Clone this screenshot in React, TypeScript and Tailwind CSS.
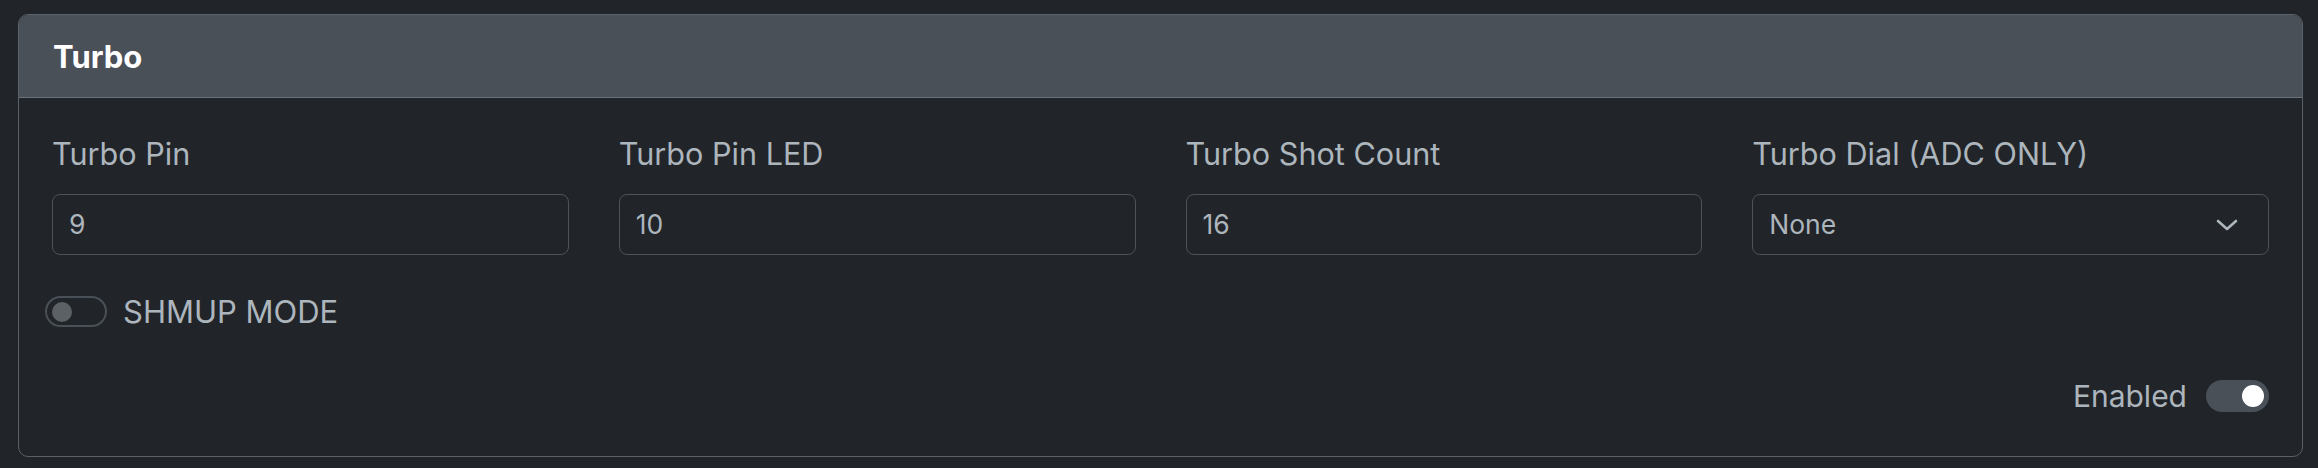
import React from 'react';

const fields = [
  { label: 'Turbo Pin', value: '9' },
  { label: 'Turbo Pin LED', value: '10' },
  { label: 'Turbo Shot Count', value: '16' },
];

function Chevron() {
  return (
    <svg width="22" height="12" viewBox="0 0 22 12" fill="none">
      <polyline points="2,2 11,10 20,2" stroke="#adb5bd" strokeWidth="2.6" strokeLinecap="round" strokeLinejoin="round" />
    </svg>
  );
}

export default function App() {
  return (
    <div
      className="w-full h-[468px] bg-[#212529] pt-[14px] pl-[18px] pr-[15px]"
      style={{ fontFamily: 'Inter, "Noto Sans", sans-serif' }}
    >
      <div className="border border-[#5a6168] rounded-[10px] overflow-hidden">
        <div className="h-[83px] bg-[#4a5058] border-b border-[#6c737a] px-[34px] flex items-center">
          <h5 className="text-[31px] font-bold text-white leading-none">Turbo</h5>
        </div>

        <div className="pt-[38px] pb-[44px] px-[33px]">
          <div className="grid grid-cols-4 gap-x-[50px]">
            {fields.map((f) => (
              <div key={f.label}>
                <label className="block text-[30.6px] leading-[36px] text-[#adb5bd] mb-[22px]">{f.label}</label>
                <div className="h-[61px] border border-[#4d5359] rounded-[8px] flex items-center px-[16px] text-[26.5px] text-[#adb5bd]">
                  {f.value}
                </div>
              </div>
            ))}
            <div>
              <label className="block text-[30.6px] leading-[36px] text-[#adb5bd] mb-[22px]">Turbo Dial (ADC ONLY)</label>
              <div className="h-[61px] border border-[#4d5359] rounded-[8px] flex items-center justify-between pl-[16px] pr-[30px] text-[26.5px] text-[#adb5bd]">
                <span>None</span>
                <Chevron />
              </div>
            </div>
          </div>

          <div className="mt-[41px] -ml-[7px] flex items-center gap-[16px]">
            <div className="w-[62px] h-[31px] rounded-full border-2 border-[#4a5057] flex items-center pl-[5px]">
              <div className="w-[20px] h-[20px] rounded-full bg-[#5c6166]" />
            </div>
            <span className="text-[31px] leading-none text-[#adb5bd]">SHMUP MODE</span>
          </div>

          <div className="mt-[53px] flex items-center justify-end gap-[19px]">
            <span className="text-[30px] leading-none text-[#adb5bd]">Enabled</span>
            <div className="w-[63px] h-[32px] rounded-full bg-[#495057] flex items-center justify-end pr-[5px]">
              <div className="w-[22px] h-[22px] rounded-full bg-white" />
            </div>
          </div>
        </div>
      </div>
    </div>
  );
}
